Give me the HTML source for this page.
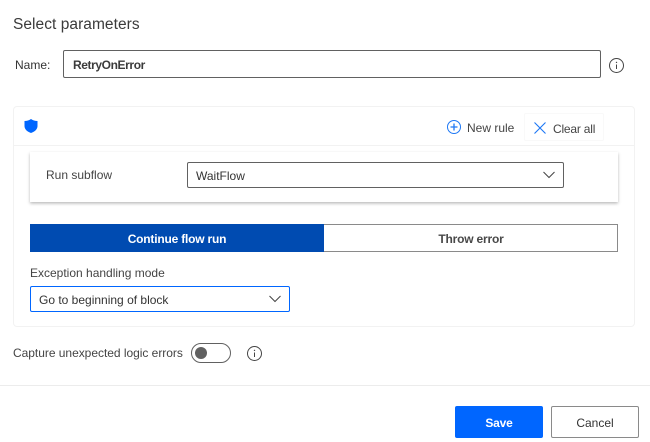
<!DOCTYPE html>
<html>
<head>
<meta charset="utf-8">
<style>
html,body{margin:0;padding:0;background:#fff;}
body{width:650px;height:442px;position:relative;overflow:hidden;font-family:"Liberation Sans",sans-serif;font-size:12px;color:#333;}
.a{position:absolute;box-sizing:border-box;}
.t{position:absolute;white-space:nowrap;line-height:16px;}
svg{position:absolute;overflow:visible;}
</style>
</head>
<body>
<div class="t" style="left:13px;top:16px;font-size:15.5px;line-height:18px;color:#3b3b3b;letter-spacing:.05px;">Select parameters</div>
<div class="t" style="left:15px;top:57px;font-size:12px;color:#333;">Name:</div>
<div class="a" style="left:63px;top:50px;width:538px;height:28px;border:1px solid #616161;border-radius:2px;"></div>
<div class="t" style="left:73px;top:57px;font-size:12px;font-weight:bold;color:#3b3b3b;letter-spacing:-.4px;">RetryOnError</div>
<svg style="left:609px;top:57.5px;" width="15" height="15" viewBox="0 0 15 15"><circle cx="7.5" cy="7.5" r="7" fill="none" stroke="#444" stroke-width="1"/><path d="M7.5 6.5V11" stroke="#444" stroke-width="1"/><circle cx="7.5" cy="4.4" r=".7" fill="#444"/></svg>

<div class="a" style="left:13px;top:106px;width:622px;height:221px;border:1px solid #f2f2f2;border-radius:4px;"></div>
<div class="a" style="left:14px;top:145px;width:620px;height:1px;background:#f2f2f2;"></div>
<svg style="left:24px;top:119px;" width="14" height="14" viewBox="0 0 14 14"><path d="M7 0C8.800 1.300 11 2 13.500 2V7C13.500 10.500 10.500 12.800 7 14C3.500 12.800 .5 10.500 .5 7V2C3 2 5.200 1.300 7 0Z" fill="#0066ff"/></svg>
<svg style="left:447px;top:120px;" width="14" height="14" viewBox="0 0 14 14"><circle cx="7" cy="7" r="6.500" fill="none" stroke="#1e78f5" stroke-width="1"/><path d="M7 3.500V10.500M3.500 7H10.500" stroke="#1e78f5" stroke-width="1.300"/></svg>
<div class="t" style="left:467px;top:120px;font-size:12px;color:#444;">New rule</div>
<div class="a" style="left:524px;top:113px;width:80px;height:28px;border:1px solid #f9f9f9;border-radius:2px;"></div>
<svg style="left:534px;top:122px;" width="12" height="12" viewBox="0 0 12 12"><path d="M.5 .5L11.500 11.500M11.500 .5L.5 11.500" stroke="#1e78f5" stroke-width="1.100" fill="none"/></svg>
<div class="t" style="left:553px;top:121px;font-size:12px;color:#444;letter-spacing:-.2px;">Clear all</div>

<div class="a" style="left:30px;top:152px;width:588px;height:50px;background:#fff;box-shadow:0 1.500px 3px rgba(0,0,0,.28);"></div>
<div class="t" style="left:46px;top:167px;font-size:12px;color:#444;">Run subflow</div>
<div class="a" style="left:187px;top:162px;width:377px;height:26px;border:1px solid #616161;border-radius:2px;"></div>
<div class="t" style="left:196px;top:168px;font-size:12px;color:#333;">WaitFlow</div>
<svg style="left:543px;top:171px;" width="12" height="8" viewBox="0 0 12 8"><path d="M.5 1L6 6.500L11.500 1" stroke="#444" stroke-width="1" fill="none"/></svg>

<div class="a" style="left:30px;top:224px;width:294px;height:28px;background:#004bb1;"></div>
<div class="t" style="left:30px;top:231px;width:294px;text-align:center;font-size:12px;font-weight:bold;color:#fff;letter-spacing:-.2px;">Continue flow run</div>
<div class="a" style="left:324px;top:224px;width:294px;height:28px;border:1px solid #8a8a8a;border-left:0;"></div>
<div class="t" style="left:324px;top:231px;width:294px;text-align:center;font-size:12px;font-weight:bold;color:#484848;letter-spacing:-.2px;">Throw error</div>

<div class="t" style="left:30px;top:265px;font-size:12px;color:#444;">Exception handling mode</div>
<div class="a" style="left:30px;top:286px;width:260px;height:26px;border:1px solid #0066ff;border-radius:2px;"></div>
<div class="t" style="left:39px;top:292px;font-size:12px;color:#333;">Go to beginning of block</div>
<svg style="left:269px;top:295px;" width="12" height="8" viewBox="0 0 12 8"><path d="M.5 1L6 6.500L11.500 1" stroke="#444" stroke-width="1" fill="none"/></svg>

<div class="t" style="left:13px;top:345px;font-size:12px;color:#444;letter-spacing:-.03px;">Capture unexpected logic errors</div>
<div class="a" style="left:191px;top:343px;width:40px;height:20px;border:1px solid #616161;border-radius:10px;"></div>
<div class="a" style="left:195px;top:347px;width:12px;height:12px;background:#616161;border-radius:50%;"></div>
<svg style="left:246.500px;top:345.500px;" width="15" height="15" viewBox="0 0 15 15"><circle cx="7.500" cy="7.500" r="7" fill="none" stroke="#444" stroke-width="1"/><path d="M7.500 6.500V11" stroke="#444" stroke-width="1"/><circle cx="7.500" cy="4.400" r=".7" fill="#444"/></svg>

<div class="a" style="left:0;top:385px;width:650px;height:1px;background:#ececec;"></div>
<div class="a" style="left:455px;top:406px;width:88px;height:32px;background:#0066ff;border-radius:2px;"></div>
<div class="t" style="left:455px;top:415px;width:88px;text-align:center;font-size:12px;font-weight:bold;color:#fff;letter-spacing:-.2px;">Save</div>
<div class="a" style="left:551px;top:406px;width:88px;height:32px;border:1px solid #8a8a8a;border-radius:2px;"></div>
<div class="t" style="left:551px;top:415px;width:88px;text-align:center;font-size:12px;color:#333;">Cancel</div>
</body>
</html>
